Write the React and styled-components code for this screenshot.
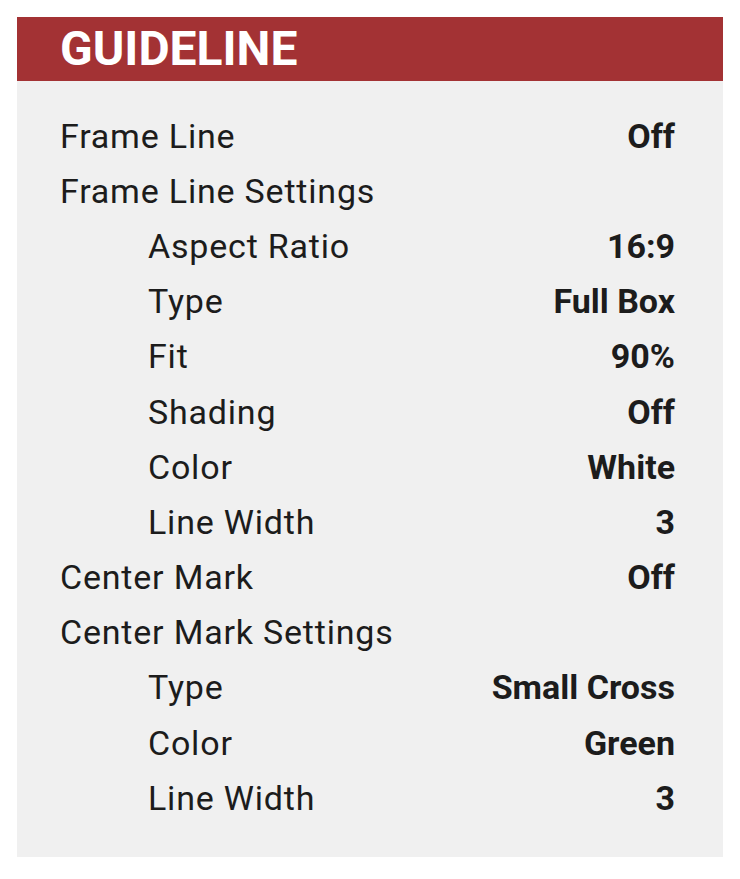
import React from 'react';
import styled, { createGlobalStyle } from 'styled-components';

const GlobalStyle = createGlobalStyle`
  html, body {
    margin: 0;
    padding: 0;
    background: #ffffff;
  }
  body {
    font-family: Roboto, "Noto Sans", sans-serif;
  }
`;

const Page = styled.div`
  padding: 17px 17px 23px 17px;
  width: 706px;
`;

const Panel = styled.section`
  background: #f0f0f0;
`;

const Header = styled.header`
  background: #a33234;
  height: 64px;
  display: flex;
  align-items: center;
  padding-left: 43px;
`;

const Title = styled.h1`
  margin: 0;
  color: #ffffff;
  font-size: 48px;
  font-weight: 700;
  line-height: 1;
`;

const List = styled.div`
  display: flex;
  flex-direction: column;
  padding: 27px 48px 32px 43px;
`;

const Row = styled.div`
  display: flex;
  align-items: center;
  justify-content: space-between;
  height: 55.2px;
  padding-left: ${p => (p.$sub ? '88px' : '0')};
  color: #1c1c1c;
`;

const Label = styled.span`
  font-size: 34px;
  font-weight: 400;
  letter-spacing: 0.8px;
  line-height: 1;
`;

const Value = styled.span`
  font-size: 34px;
  font-weight: 700;
  line-height: 1;
`;

const rows = [
  { label: 'Frame Line', value: 'Off' },
  { label: 'Frame Line Settings' },
  { label: 'Aspect Ratio', value: '16:9', sub: true },
  { label: 'Type', value: 'Full Box', sub: true },
  { label: 'Fit', value: '90%', sub: true },
  { label: 'Shading', value: 'Off', sub: true },
  { label: 'Color', value: 'White', sub: true },
  { label: 'Line Width', value: '3', sub: true },
  { label: 'Center Mark', value: 'Off' },
  { label: 'Center Mark Settings' },
  { label: 'Type', value: 'Small Cross', sub: true },
  { label: 'Color', value: 'Green', sub: true },
  { label: 'Line Width', value: '3', sub: true },
];

export default function App() {
  return (
    <>
      <GlobalStyle />
      <Page>
        <Panel>
          <Header>
            <Title>GUIDELINE</Title>
          </Header>
          <List>
            {rows.map((r, i) => (
              <Row key={i} $sub={r.sub}>
                <Label>{r.label}</Label>
                {r.value && <Value>{r.value}</Value>}
              </Row>
            ))}
          </List>
        </Panel>
      </Page>
    </>
  );
}
